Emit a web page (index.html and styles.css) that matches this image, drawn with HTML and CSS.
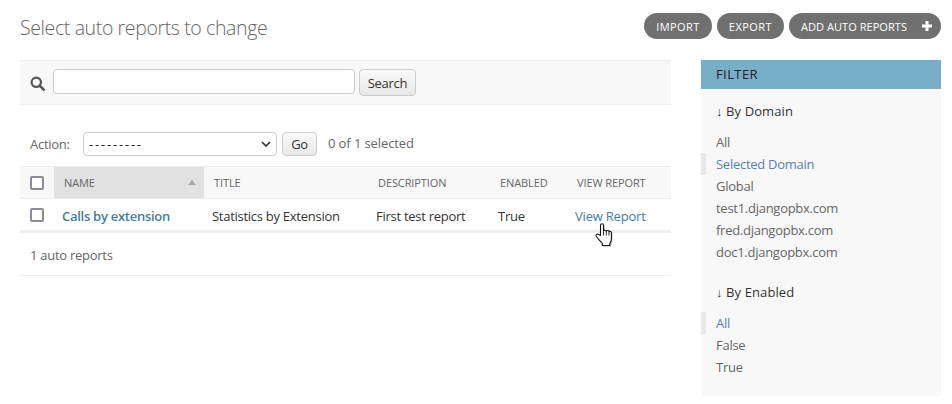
FILE: index.html
```html
<!DOCTYPE html>
<html lang="en">
<head>
<meta charset="utf-8">
<title>Select auto reports to change</title>
<link rel="stylesheet" href="styles.css">
</head>
<body>
<div class="page">
  <header class="top">
    <h1 class="title">Select auto reports to change</h1>
    <div class="tools">
      <a class="pill">IMPORT</a>
      <a class="pill">EXPORT</a>
      <a class="pill pill-add">ADD AUTO REPORTS
        <svg class="plus" viewBox="0 0 12 12" width="12" height="12"><path d="M4.5 1h3v3.5H11v3H7.5V11h-3V7.5H1v-3h3.5z"/></svg>
      </a>
    </div>
  </header>
  <div class="columns">
    <main class="list">
      <div class="search">
        <svg class="loupe" viewBox="0 0 16 16" width="15" height="15"><circle cx="6.7" cy="6.7" r="5" fill="none" stroke="#555" stroke-width="2.4"/><path d="M10.3 10.3 14.6 14.6" stroke="#555" stroke-width="2.8" stroke-linecap="round"/></svg>
        <input class="field" type="text" aria-label="Search">
        <button class="btn search-btn">Search</button>
      </div>
      <div class="actions">
        <span class="action-label">Action:</span>
        <span class="select">
          <span class="dashes">---------</span>
          <svg class="chev" viewBox="0 0 10 6" width="10" height="6"><path d="M1 1l4 4 4-4" fill="none" stroke="#333" stroke-width="1.7"/></svg>
        </span>
        <button class="btn go-btn">Go</button>
        <span class="count">0 of 1 selected</span>
      </div>
      <table class="results">
        <colgroup>
          <col class="c-check"><col class="c-name"><col class="c-title"><col class="c-desc"><col class="c-enabled"><col class="c-view">
        </colgroup>
        <thead>
          <tr>
            <th class="check-cell"><span class="box"></span></th>
            <th class="sorted"><span class="sorted-in"><span>NAME</span><span class="arrow"></span></span></th>
            <th>TITLE</th>
            <th>DESCRIPTION</th>
            <th>ENABLED</th>
            <th>VIEW REPORT</th>
          </tr>
        </thead>
        <tbody>
          <tr>
            <td class="check-cell"><span class="box"></span></td>
            <td class="name-cell"><a class="link strong">Calls by extension</a></td>
            <td>Statistics by Extension</td>
            <td>First test report</td>
            <td>True</td>
            <td><a class="link">View Report</a></td>
          </tr>
        </tbody>
      </table>
      <p class="paginator">1 auto reports</p>
    </main>
    <aside class="filter">
      <h2 class="filter-head">FILTER</h2>
      <h3 class="filter-group first">↓ By Domain</h3>
      <ul class="options">
        <li>All</li>
        <li class="on">Selected Domain</li>
        <li>Global</li>
        <li>test1.djangopbx.com</li>
        <li>fred.djangopbx.com</li>
        <li>doc1.djangopbx.com</li>
      </ul>
      <h3 class="filter-group">↓ By Enabled</h3>
      <ul class="options">
        <li class="on">All</li>
        <li>False</li>
        <li>True</li>
      </ul>
    </aside>
  </div>
</div>
<svg class="cursor" viewBox="0 0 20 26" width="20" height="26">
  <path d="M6.5 13.5V3.2c0-2 3-2 3 0v6c.3-1.4 2.6-1.4 2.8.2.4-1.3 2.5-1.2 2.7.4.5-1 2.4-.8 2.4.8v6.4c0 2-.8 3.4-1.6 4.6v1.9H8.3v-2c-1.4-1.6-4.8-5.2-6-7-1.1-1.8.9-3.2 2.3-2z" fill="#999" opacity=".55" transform="translate(1.2 1.2)"/>
  <path d="M6.5 13.5V3.2c0-2 3-2 3 0v6c.3-1.4 2.6-1.4 2.8.2.4-1.3 2.5-1.2 2.7.4.5-1 2.4-.8 2.4.8v6.4c0 2-.8 3.4-1.6 4.6v1.9H8.3v-2c-1.4-1.6-4.8-5.2-6-7-1.1-1.8.9-3.2 2.3-2z" fill="#fff" stroke="#111" stroke-width="1.1" stroke-linejoin="round"/>
  <path d="M9.5 9.5v4M12.3 9.5v4M15 10v3.5" stroke="#111" stroke-width=".9" fill="none"/>
</svg>
</body>
</html>
```
FILE: styles.css
```css
* { box-sizing: border-box; }
html, body { margin: 0; padding: 0; background: #fff; }
body {
  width: 952px;
  height: 404px;
  overflow: hidden;
  position: relative;
  font-family: "Open Sans", "Noto Sans", "Liberation Sans", sans-serif;
  font-size: 13px;
  letter-spacing: -.27px;
  color: #333;
}
.page { padding: 13px 11px 0 20px; }
.top { display: flex; justify-content: space-between; align-items: flex-start; height: 47px; }
.title { margin: 3px 0 0; font-size: 19.5px; line-height: 24px; font-weight: 300; letter-spacing: -.38px; color: #666; }
.tools { display: flex; gap: 5px; }
.pill {
  display: flex;
  align-items: center;
  height: 26px;
  padding: 0 12px;
  border-radius: 13px;
  background: #707070;
  color: #fff;
  font-size: 11px;
  letter-spacing: .45px;
}
.pill-add { gap: 14px; padding-right: 8px; letter-spacing: .05px; }
.plus { fill: #fff; width: 12px; height: 12px; }
.columns { display: flex; justify-content: space-between; align-items: flex-start; }
.list { width: 651px; }
.search {
  display: flex;
  align-items: flex-start;
  height: 45px;
  padding: 8px 0 0 10px;
  background: #f8f8f8;
  border-top: 1px solid #eee;
  border-bottom: 1px solid #eee;
}
.loupe { margin: 7px 8px 0 0; flex: none; }
.field {
  width: 302px;
  height: 25px;
  margin: 0;
  border: 1px solid #ccc;
  border-radius: 4px;
  background: #fff;
}
.btn {
  font-family: inherit;
  font-size: 13px;
  letter-spacing: inherit;
  color: #333;
  border: 1px solid #ccc;
  border-radius: 4px;
  background: linear-gradient(#fafafa, #e8e8e8);
  padding: 0;
}
.search-btn { width: 57px; height: 27px; margin-left: 4px; }
.actions { display: flex; align-items: center; height: 24px; margin-top: 27px; padding-left: 10px; }
.action-label { width: 53px; color: #666; }
.select {
  display: flex;
  align-items: center;
  justify-content: space-between;
  width: 194px;
  height: 24px;
  padding: 0 5px 0 5px;
  border: 1px solid #ccc;
  border-radius: 4px;
  background: #fff;
  color: #222;
}
.dashes { letter-spacing: 1.8px; }
.go-btn { width: 35px; height: 24px; margin-left: 5px; }
.count { margin: -3px 0 0 11px; color: #666; letter-spacing: -.1px; }
.results {
  width: 651px;
  margin-top: 10px;
  border-collapse: collapse;
  table-layout: fixed;
  border-top: 1px solid #eee;
}
.c-check { width: 34px; }
.c-name { width: 150px; }
.c-title { width: 164px; }
.c-desc { width: 122px; }
.c-enabled { width: 77px; }
.c-view { width: 104px; }
.results th {
  height: 32px;
  padding: 0 0 0 10px;
  background: #f8f8f8;
  border-bottom: 1px solid #eee;
  text-align: left;
  font-size: 11px;
  font-weight: 400;
  letter-spacing: -.1px;
  color: #666;
  white-space: nowrap;
}
.results th.sorted { background: #e1e1e1; }
.sorted-in { display: flex; justify-content: space-between; align-items: center; padding-right: 8px; }
.arrow { border: 4px solid transparent; border-top: 0; border-bottom: 5px solid #aaa; width: 0; height: 0; }
.results td {
  height: 33px;
  padding: 2px 0 0 8px;
  border-bottom: 3px solid #eee;
  color: #333;
  white-space: nowrap;
}
.results .check-cell { padding: 0 0 0 10px; }
.box {
  display: block;
  width: 14px;
  height: 14px;
  border: 2px solid #8c8c99;
  border-radius: 2px;
  background: #fff;
}
.link { color: #447e9b; letter-spacing: -.2px; }
.strong { font-weight: 600; letter-spacing: -.27px; }
.paginator {
  height: 43px;
  margin: 0;
  padding: 13px 0 0 10px;
  line-height: 18px;
  color: #666;
  border-bottom: 1px solid #eee;
}
.filter { width: 240px; height: 336px; background: #f8f8f8; }
.filter-head {
  margin: 0;
  height: 29px;
  padding: 0 15px;
  line-height: 29px;
  background: #79aec8;
  color: #222;
  font-size: 13px;
  font-weight: 400;
  letter-spacing: .4px;
}
.filter-group {
  margin: 0;
  padding: 20px 15px 0;
  font-size: 13px;
  line-height: 18px;
  font-weight: 400;
  letter-spacing: .1px;
  color: #333;
}
.filter-group.first { padding-top: 13px; }
.options { list-style: none; margin: 11px 0 0; padding: 0; }
.options li {
  height: 22px;
  line-height: 22px;
  padding-left: 15px;
  color: #666;
}
.options li.on {
  color: #5b80b2;
  border-left: 5px solid #e8e8e8;
  padding-left: 10px;
}
.cursor { position: absolute; left: 594px; top: 222px; }
```
